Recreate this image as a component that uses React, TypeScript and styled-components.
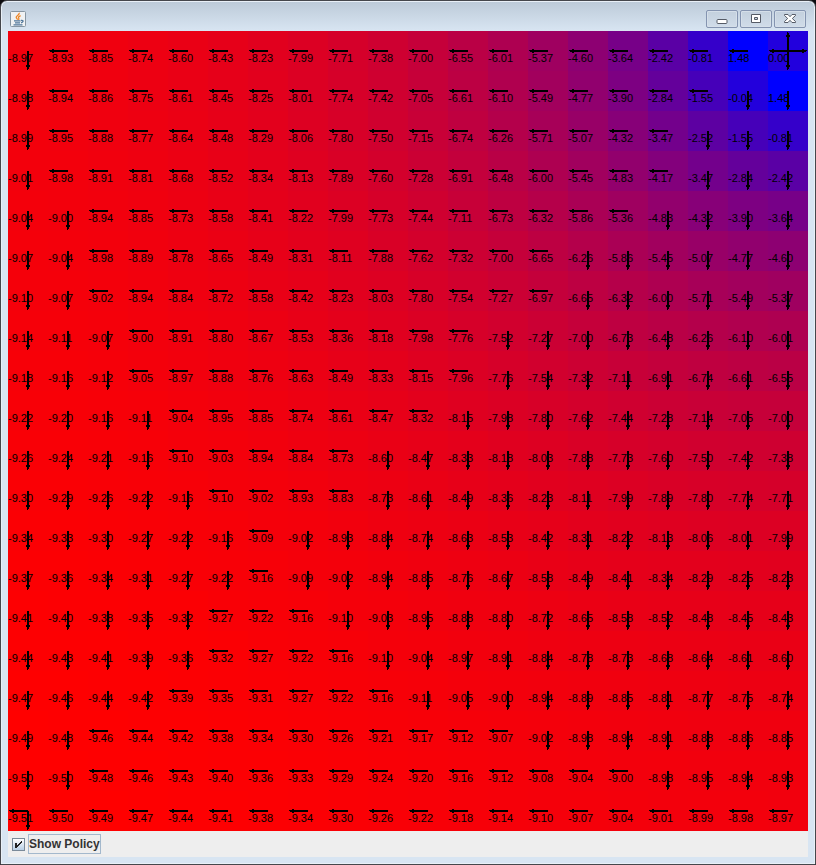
import React, { useState } from "react";
import styled, { createGlobalStyle } from "styled-components";

const GlobalStyle = createGlobalStyle`
  * { box-sizing: border-box; }
  body { margin: 0; background: #0b0b0f; font-family: "Liberation Sans", Arial, sans-serif; }
`;

/* Each entry is a state value followed by its greedy moves (l, r, u, d). */
const STATES = `
-8.97d -8.93l -8.85l -8.74l -8.60l -8.43l -8.23l -7.99l -7.71l -7.38l -7.00l -6.55l -6.01l -5.37l -4.60l -3.64l -2.42l -0.81l 1.48l 0.00lrud
-8.98d -8.94l -8.86l -8.75l -8.61l -8.45l -8.25l -8.01l -7.74l -7.42l -7.05l -6.61l -6.10l -5.49l -4.77l -3.90l -2.84l -1.55l -0.04d 1.48d
-8.99d -8.95l -8.88l -8.77l -8.64l -8.48l -8.29l -8.06l -7.80l -7.50l -7.15l -6.74l -6.26l -5.71l -5.07l -4.32l -3.47l -2.52d -1.55d -0.81d
-9.01d -8.98l -8.91l -8.81l -8.68l -8.52l -8.34l -8.13l -7.89l -7.60l -7.28l -6.91l -6.48l -6.00l -5.45l -4.83l -4.17l -3.47d -2.84d -2.42d
-9.04d -9.00d -8.94l -8.85l -8.73l -8.58l -8.41l -8.22l -7.99l -7.73l -7.44l -7.11l -6.73l -6.32l -5.86l -5.36l -4.83d -4.32d -3.90d -3.64d
-9.07d -9.04d -8.98l -8.89l -8.78l -8.65l -8.49l -8.31l -8.11l -7.88l -7.62l -7.32l -7.00l -6.65l -6.26d -5.86d -5.45d -5.07d -4.77d -4.60d
-9.10d -9.07d -9.02l -8.94l -8.84l -8.72l -8.58l -8.42l -8.23l -8.03l -7.80l -7.54l -7.27l -6.97l -6.65d -6.32d -6.00d -5.71d -5.49d -5.37d
-9.14d -9.11d -9.07d -9.00l -8.91l -8.80l -8.67l -8.53l -8.36l -8.18l -7.98l -7.76l -7.52d -7.27d -7.00d -6.73d -6.48d -6.26d -6.10d -6.01d
-9.18d -9.16d -9.12d -9.05l -8.97l -8.88l -8.76l -8.63l -8.49l -8.33l -8.15l -7.96l -7.76d -7.54d -7.32d -7.11d -6.91d -6.74d -6.61d -6.55d
-9.22d -9.20d -9.16d -9.11d -9.04l -8.95l -8.85l -8.74l -8.61l -8.47l -8.32l -8.15d -7.98d -7.80d -7.62d -7.44d -7.28d -7.14d -7.05d -7.00d
-9.26d -9.24d -9.21d -9.16d -9.10l -9.03l -8.94l -8.84l -8.73l -8.60d -8.47d -8.33d -8.18d -8.03d -7.88d -7.73d -7.60d -7.50d -7.42d -7.38d
-9.30d -9.29d -9.26d -9.22d -9.16d -9.10l -9.02l -8.93l -8.83l -8.73d -8.61d -8.49d -8.36d -8.23d -8.11d -7.99d -7.89d -7.80d -7.74d -7.71d
-9.34d -9.33d -9.30d -9.27d -9.22d -9.16d -9.09l -9.02d -8.93d -8.84d -8.74d -8.63d -8.53d -8.42d -8.31d -8.22d -8.13d -8.06d -8.01d -7.99d
-9.37d -9.36d -9.34d -9.31d -9.27d -9.22d -9.16l -9.09d -9.02d -8.94d -8.85d -8.76d -8.67d -8.58d -8.49d -8.41d -8.34d -8.29d -8.25d -8.23d
-9.41d -9.40d -9.38d -9.35d -9.32d -9.27l -9.22l -9.16l -9.10d -9.03d -8.95d -8.88d -8.80d -8.72d -8.65d -8.58d -8.52d -8.48d -8.45d -8.43d
-9.44d -9.43d -9.41d -9.39d -9.36d -9.32l -9.27l -9.22l -9.16l -9.10d -9.04d -8.97d -8.91d -8.84d -8.78d -8.73d -8.68d -8.64d -8.61d -8.60d
-9.47d -9.46d -9.44d -9.42d -9.39l -9.35l -9.31l -9.27l -9.22l -9.16l -9.11d -9.05d -9.00d -8.94d -8.89d -8.85d -8.81d -8.77d -8.75d -8.74d
-9.49d -9.48d -9.46l -9.44l -9.42l -9.38l -9.34l -9.30l -9.26l -9.21l -9.17l -9.12l -9.07l -9.02d -8.98d -8.94d -8.91d -8.88d -8.86d -8.85d
-9.50d -9.50d -9.48l -9.46l -9.43l -9.40l -9.36l -9.33l -9.29l -9.24l -9.20l -9.16l -9.12l -9.08l -9.04l -9.00l -8.98d -8.95d -8.94d -8.93d
-9.51ld -9.50l -9.49l -9.47l -9.44l -9.41l -9.38l -9.34l -9.30l -9.26l -9.22l -9.18l -9.14l -9.10l -9.07l -9.04l -9.01l -8.99l -8.98l -8.97l
`;

type State = { value: string; moves: string[]; color: string };

const LOW = -9.51;
const HIGH = 1.48;

function parseState(entry: string): State {
  const value = entry.replace(/[lrud]/g, "");
  const blue = Math.round(((Number(value) - LOW) / (HIGH - LOW)) * 255);
  return { value, moves: [...entry.replace(/[^lrud]/g, "")], color: `rgb(${255 - blue}, 0, ${blue})` };
}

const GRID = STATES.trim().split("\n").map((line) => line.split(" ").map(parseState));

const ARROWS: Record<string, string> = {
  l: "M20 19H6V18H4V19H1V20H2V21H4V22H6V21H20Z",
  r: "M20 19H34V18H36V19H39V20H38V21H36V22H34V21H20Z",
  u: "M19 20V6H18V4H19V1H20V2H21V4H22V6H21V20Z",
  d: "M19 20V34H18V36H19V39H20V38H21V36H22V34H21V20Z",
};

const Frame = styled.main`
  display: flex;
  flex-direction: column;
  min-height: 100vh;
  padding: 0 7px 7px;
  border: 1px solid #45474c;
  border-radius: 7px 7px 0 0;
  background: linear-gradient(#bccad8, #d8e5f2 30px);
  box-shadow: inset 0 0 0 1px #e9f0f7;
`;

const TitleBar = styled.header`
  display: flex;
  align-items: center;
  justify-content: space-between;
  height: 30px;
  padding: 6px 2px 0;
`;

const WindowButtons = styled.div`
  display: flex;
  gap: 2px;
`;

const WindowButton = styled.button`
  display: grid;
  place-items: center;
  width: 32px;
  height: 18px;
  padding: 0;
  border: 1px solid #8494b0;
  border-radius: 2px;
  background: linear-gradient(#c3d0dd, #d0dce9);
  box-shadow: inset 0 0 0 1px #d5dfe9;
`;

const Values = styled.table`
  width: 100%;
  table-layout: fixed;
  border-collapse: collapse;
`;

const Cell = styled.td`
  position: relative;
  height: 40px;
  padding: 20px 0 0;
  vertical-align: top;
  font-size: 11px;
  line-height: 14px;
  white-space: nowrap;
  color: #000;
`;

const Policy = styled.svg`
  position: absolute;
  inset: 0;
  margin: auto;
`;

const Controls = styled.footer`
  display: flex;
  flex: 1;
  align-items: center;
  padding: 0 4px;
  background: #eee;
`;

const PolicyLabel = styled.label`
  display: flex;
  align-items: center;
  gap: 3px;
  font-size: 12px;
  font-weight: bold;
  line-height: 18px;
  color: #333;
`;

const LabelText = styled.span`
  border: 1px solid #a3b8cc;
`;

const CheckBox = styled.input`
  appearance: none;
  width: 13px;
  height: 13px;
  margin: 0;
  border: 1px solid #7a8a99;
  background: linear-gradient(#fff, #b8cfe5);
  &:checked {
    background: url("data:image/svg+xml,%3Csvg xmlns='http://www.w3.org/2000/svg' width='11' height='11'%3E%3Cpath d='M2 4H4V6H5V5H6V4H7V3H8V2H9V4H8V5H7V6H6V7H5V8H4V9H2Z' fill='%23222'/%3E%3C/svg%3E") center no-repeat,
      linear-gradient(#fff, #b8cfe5);
  }
`;

function JavaIcon() {
  return (
    <svg width="16" height="16" viewBox="0 0 16 16" fill="none" role="img" aria-label="Java">
      <rect x=".5" y=".5" width="15" height="15" rx="1" fill="#f0f2f3" stroke="#8796a2" />
      <path d="M9.2 1.8C10 4 5.6 4.8 6.2 6.6C6.5 7.5 7.6 8 7.6 8.8M10.6 4.6C8 5.8 8.2 6.4 8.8 7.2C9.2 7.9 8.8 8.4 8.4 8.8" stroke="#ee8422" strokeWidth="1.3" />
      <path d="M4 9.8H10.5M5 11.8H10M3.5 13.8H12.5M11 9.5C14 9 13.6 11.4 11 11.8" stroke="#50779a" strokeWidth="1.3" />
    </svg>
  );
}

export default function App() {
  const [showPolicy, setShowPolicy] = useState(true);
  return (
    <>
      <GlobalStyle />
      <Frame>
        <TitleBar>
          <JavaIcon />
          <WindowButtons>
            <WindowButton aria-label="Minimize">
              <svg width="12" height="12"><rect x="1" y="6.5" width="10" height="4" rx="1" fill="#fff" stroke="#555b66" /></svg>
            </WindowButton>
            <WindowButton aria-label="Maximize">
              <svg width="12" height="12"><path d="M1.5 1.5H10.5V9.5H1.5ZM4.5 4.5V6.5H7.5V4.5Z" fill="#fff" fillRule="evenodd" stroke="#555b66" /></svg>
            </WindowButton>
            <WindowButton aria-label="Close">
              <svg width="12" height="12"><path d="M.5 1.5H4L6 3.7L8 1.5H11.5V2.5L8.3 5.5L11.5 8.5V9.5H8L6 7.3L4 9.5H.5V8.5L3.7 5.5L.5 2.5Z" fill="#fff" stroke="#555b66" /></svg>
            </WindowButton>
          </WindowButtons>
        </TitleBar>
        <Values aria-label="State values">
          <tbody>
            {GRID.map((row, r) => (
              <tr key={r}>
                {row.map((state, c) => (
                  <Cell key={c} style={{ backgroundColor: state.color }}>
                    {state.value}
                    {showPolicy && (
                      <Policy width="40" height="40" shapeRendering="crispEdges" aria-hidden="true">
                        {state.moves.map((move) => <path key={move} d={ARROWS[move]} />)}
                      </Policy>
                    )}
                  </Cell>
                ))}
              </tr>
            ))}
          </tbody>
        </Values>
        <Controls>
          <PolicyLabel>
            <CheckBox type="checkbox" checked={showPolicy} onChange={(e) => setShowPolicy(e.target.checked)} />
            <LabelText>Show Policy</LabelText>
          </PolicyLabel>
        </Controls>
      </Frame>
    </>
  );
}
